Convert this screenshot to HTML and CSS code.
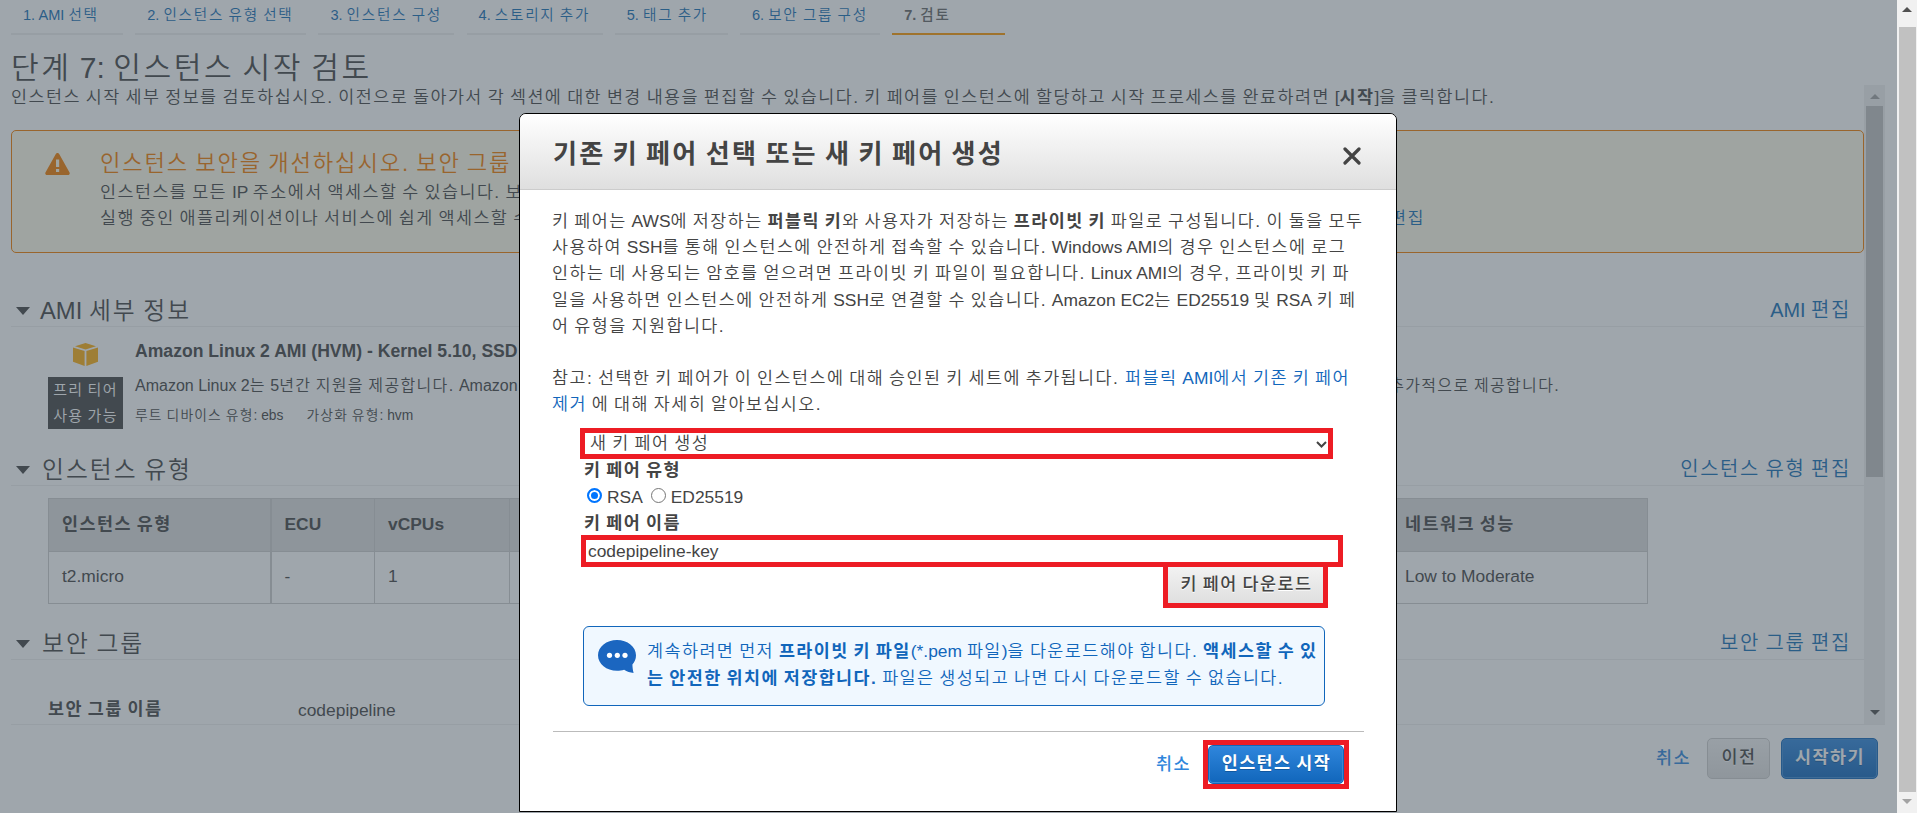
FILE: index.html
```html
<!DOCTYPE html>
<html lang="ko">
<head>
    <meta charset="utf-8">
    <title>인스턴스 시작 검토</title>
    <link rel="stylesheet" href="styles.css">
</head>
<body>
    <div class="page">
        <div class="wizard">
            <ul class="steps">
                <li class="step step-1"><i>1. AMI </i>선택</li>
                <li class="step step-2"><i>2. </i>인스턴스 유형 선택</li>
                <li class="step step-3"><i>3. </i>인스턴스 구성</li>
                <li class="step step-4"><i>4. </i>스토리지 추가</li>
                <li class="step step-5"><i>5. </i>태그 추가</li>
                <li class="step step-6"><i>6. </i>보안 그룹 구성</li>
                <li class="step step-7 active"><i>7. </i>검토</li>
            </ul>

            <h1>단계<i> 7: </i>인스턴스 시작 검토</h1>

            <div class="panel">
                <div class="panel-content">
                    <p class="lead">인스턴스 시작 세부 정보를 검토하십시오. 이전으로 돌아가서 각 섹션에 대한 변경 내용을 편집할 수 있습니다. 키 페어를 인스턴스에 할당하고 시작 프로세스를 완료하려면 <i>[</i><b>시작</b><i>]</i>을 클릭합니다.</p>

                    <div class="warning">
                        <svg class="warning-icon" viewBox="0 0 25 22">
                            <path d="M12.5 0c.8 0 1.3.5 1.7 1.1l10.2 18.2c.8 1.4.1 2.7-1.5 2.7H2.1C.5 22-.2 20.7.6 19.3L10.8 1.1C11.2.5 11.7 0 12.5 0z" fill="#f37c00"/>
                            <path d="M11 6.500h3.200v7.500H11zM11 16h3.200v3H11z" fill="#fffbe8"/>
                        </svg>
                        <div class="warning-text">
                            <div class="warning-title">인스턴스 보안을 개선하십시오. 보안 그룹</div>
                            <div>인스턴스를 모든 <i>IP </i>주소에서 액세스할 수 있습니다. 보안</div>
                            <div class="split"><span>실행 중인 애플리케이션이나 서비스에 쉽게 액세스할 수</span><a>편집</a></div>
                        </div>
                    </div>

                    <div class="section-header first">
                        <span class="caret"></span>
                        <h2><i>AMI </i>세부 정보</h2>
                        <a><i>AMI </i>편집</a>
                    </div>
                    <div class="ami">
                        <div class="ami-side">
                            <svg class="cube" viewBox="0 0 25 23">
                                <path d="M12.500 0l10.500 3.200-10.500 3.300L2 3.200z" fill="#fdae10"/>
                                <path d="M0 4.500l11.600 3.600V23L0 18.700z" fill="#fdae10"/>
                                <path d="M25 4.500L13.400 8.100V23L25 18.700z" fill="#fdae10"/>
                            </svg>
                            <div class="badge">프리 티어<br>사용 가능</div>
                        </div>
                        <div class="ami-info">
                            <div class="ami-name"><i>Amazon Linux 2 AMI (HVM) - Kernel 5.10, SSD</i></div>
                            <div class="ami-desc split"><span><i>Amazon Linux 2</i>는 <i>5</i>년간 지원을 제공합니다. <i>Amazon</i></span><span>추가적으로 제공합니다.</span></div>
                            <div class="ami-meta"><span>루트 디바이스 유형<i>: ebs</i></span><span>가상화 유형<i>: hvm</i></span></div>
                        </div>
                    </div>

                    <div class="section-header">
                        <span class="caret"></span>
                        <h2 class="shift">인스턴스 유형</h2>
                        <a>인스턴스 유형 편집</a>
                    </div>
                    <table class="types">
                        <thead>
                            <tr>
                                <th class="col-type">인스턴스 유형</th>
                                <th class="col-ecu"><i>ECU</i></th>
                                <th class="col-cpu"><i>vCPUs</i></th>
                                <th class="col-rest"></th>
                                <th>네트워크 성능</th>
                            </tr>
                        </thead>
                        <tbody>
                            <tr>
                                <td class="col-type"><i>t2.micro</i></td>
                                <td><i>-</i></td>
                                <td><i>1</i></td>
                                <td></td>
                                <td><i>Low to Moderate</i></td>
                            </tr>
                        </tbody>
                    </table>

                    <div class="section-header last">
                        <span class="caret"></span>
                        <h2 class="shift">보안 그룹</h2>
                        <a>보안 그룹 편집</a>
                    </div>
                    <div class="group-row">
                        <b>보안 그룹 이름</b>
                        <i>codepipeline</i>
                    </div>
                </div>
                <div class="scrollbar">
                    <span class="arrow up disabled"></span>
                    <span class="thumb"></span>
                    <span class="arrow down"></span>
                </div>
            </div>

            <div class="footer">
                <a>취소</a>
                <button class="btn">이전</button>
                <button class="btn btn-primary">시작하기</button>
            </div>

            <div class="overlay"></div>
        </div>
        <div class="scrollbar page-scrollbar">
            <span class="arrow up"></span>
            <span class="thumb"></span>
            <span class="arrow down disabled"></span>
        </div>
    </div>

    <div class="modal">
        <div class="modal-header">
            <h3>기존 키 페어 선택 또는 새 키 페어 생성</h3>
            <svg class="close" viewBox="0 0 18 18"><path d="M2 2l14 14M16 2L2 16" stroke="#444" stroke-width="3.200" stroke-linecap="round"/></svg>
        </div>
        <div class="modal-body">
            <p>키 페어는 <i>AWS</i>에 저장하는 <b>퍼블릭 키</b>와 사용자가 저장하는 <b>프라이빗 키</b> 파일로 구성됩니다. 이 둘을 모두<br>
            사용하여 <i>SSH</i>를 통해 인스턴스에 안전하게 접속할 수 있습니다. <i>Windows AMI</i>의 경우 인스턴스에 로그<br>
            인하는 데 사용되는 암호를 얻으려면 프라이빗 키 파일이 필요합니다. <i>Linux AMI</i>의 경우, 프라이빗 키 파<br>
            일을 사용하면 인스턴스에 안전하게 <i>SSH</i>로 연결할 수 있습니다. <i>Amazon EC2</i>는 <i>ED25519</i> 및 <i>RSA</i> 키 페<br>
            어 유형을 지원합니다.</p>
            <p>참고: 선택한 키 페어가 이 인스턴스에 대해 승인된 키 세트에 추가됩니다. <a class="gap">퍼블릭 <i>AMI</i>에서 기존 키 페어</a><br>
            <a>제거</a> 에 대해 자세히 알아보십시오.</p>

            <div class="key-form">
                <div class="select marked">
                    <span>새 키 페어 생성</span>
                    <svg viewBox="0 0 11 7"><path d="M1 1l4.500 4.500L10 1" fill="none" stroke="#444" stroke-width="2"/></svg>
                </div>
                <b class="label">키 페어 유형</b>
                <div class="radios">
                    <span class="radio checked"></span><i>RSA</i>
                    <span class="radio"></span><i>ED25519</i>
                </div>
                <b class="label name-label">키 페어 이름</b>
                <div class="input marked"><i>codepipeline-key</i></div>
                <div class="download marked">키 페어 다운로드</div>
                <div class="info">
                    <svg viewBox="0 0 38 33">
                        <path d="M19 0C29.500 0 38 6.600 38 15.300c0 3.700-1.300 6.700-3.600 9.200.1 3.300.5 6 1.200 8.500-3.600-.4-6.600-1.600-9.500-3.300-2.200.8-4.600 1.100-7.100 1.100C8.500 30.800 0 24 0 15.300S8.500 0 19 0z" fill="#1b66c0"/>
                        <circle cx="11.500" cy="15.300" r="2.600" fill="#fff"/>
                        <circle cx="19.300" cy="15.300" r="2.600" fill="#fff"/>
                        <circle cx="27" cy="15.300" r="2.600" fill="#fff"/>
                    </svg>
                    <p>계속하려면 먼저 <b>프라이빗 키 파일</b><i>(*.pem </i>파일<i>)</i>을 다운로드해야 합니다. <b>액세스할 수 있</b><br>
                    <b>는 안전한 위치에 저장합니다.</b> 파일은 생성되고 나면 다시 다운로드할 수 없습니다.</p>
                </div>
            </div>
        </div>
        <div class="modal-footer">
            <a>취소</a>
            <div class="launch marked"><button class="btn btn-primary">인스턴스 시작</button></div>
        </div>
    </div>
</body>
</html>
```
FILE: styles.css
```css
* {
    margin: 0;
    padding: 0;
    box-sizing: border-box;
}

body {
    height: 813px;
    overflow: hidden;
    position: relative;
    font-family: "Liberation Sans", "Noto Sans CJK KR", sans-serif;
    font-size: 17.4px;
    font-weight: 350;
    line-height: 26px;
    color: #444;
    background: #fff;
    white-space: nowrap;
}

/* hangul is set on a full em, latin runs (i) keep their own widths */
body, h1, h2, h3, .warning-title, .badge, .ami-desc, .ami-meta, .section-header a, .btn {
    letter-spacing: 0.084em;
    word-spacing: -0.084em;
}

i {
    font-style: normal;
    letter-spacing: 0;
    word-spacing: 0;
}

b {
    font-weight: 700;
}

a {
    color: #146eb4;
}

.page {
    display: flex;
    height: 813px;
}

.wizard {
    position: relative;
    width: 1897px;
    padding-left: 11px;
}

.overlay {
    position: absolute;
    inset: 0;
    background: rgba(63, 77, 89, 0.5);
}

.steps {
    display: flex;
    gap: 12.2px;
    list-style: none;
    height: 35px;
}

.step {
    height: 35px;
    padding: 2px 0 0 12px;
    font-size: 14.6px;
    line-height: 27px;
    letter-spacing: 0.12em;
    word-spacing: -0.1em;
    color: #146eb4;
    border-bottom: 2px solid #eee;
}

.step-1 { width: 112px; }
.step-2 { width: 171px; }
.step-3 { width: 136px; }
.step-4 { width: 136px; }
.step-5 { width: 113px; }
.step-6 { width: 140px; }
.step-7 { width: 113px; }

.step.active {
    color: #666;
    font-weight: 500;
    border-bottom-color: #f90;
}

.active i {
    font-weight: 700;
}

h1 {
    height: 50px;
    padding-top: 14px;
    font-size: 30.1px;
    font-weight: 350;
    line-height: 37px;
}

.panel {
    display: flex;
    width: 1874px;
    height: 640px;
    border-bottom: 1px solid #eee;
}

.panel-content {
    width: 1853px;
}

.lead {
    height: 25px;
    line-height: 25px;
}

.warning {
    display: flex;
    height: 123px;
    margin-top: 20px;
    padding: 17px 0 0 33px;
    border: 1px solid #f37c00;
    border-radius: 5px;
    background: #fffbe8;
}

.warning-icon {
    width: 25px;
    height: 22px;
    margin-top: 5px;
}

.warning-text {
    width: 1325px;
    margin-left: 30px;
}

.warning-title {
    height: 31px;
    font-size: 22.2px;
    line-height: 31px;
    color: #f37c00;
}

.split {
    display: flex;
    justify-content: space-between;
}

.section-header {
    display: flex;
    align-items: center;
    height: 36px;
    padding: 4px 13px 0 5px;
    border-bottom: 1px solid #eee;
}

.section-header.first {
    margin-top: 38px;
}

.section-header.last {
    margin-top: 20px;
}

.section-header h2 {
    margin-left: 10px;
    font-size: 23.8px;
    font-weight: 350;
    line-height: 30px;
}

.section-header h2.shift {
    margin-left: 12px;
}

.section-header a {
    margin-left: auto;
    margin-top: -2px;
    font-size: 19.9px;
}

.caret {
    border: 7px solid transparent;
    border-top: 8px solid #444;
    border-bottom: 0;
}

.ami {
    display: flex;
    height: 123px;
    padding-left: 37px;
}

.ami-side {
    width: 75px;
    padding-top: 16px;
    text-align: center;
}

.cube {
    display: block;
    width: 25px;
    height: 23px;
    margin: 0 auto;
}

.badge {
    height: 52px;
    margin-top: 11px;
    font-size: 15px;
    line-height: 26px;
    color: #fff;
    background: #444;
}

.ami-info {
    width: 1425px;
    padding-top: 11px;
    margin-left: 12px;
}

.ami-name {
    font-size: 17.6px;
    font-weight: 700;
    line-height: 26px;
}

.ami-desc {
    margin-top: 9px;
    font-size: 16px;
}

.ami-meta {
    display: flex;
    gap: 23px;
    margin-top: 4px;
    font-size: 13.8px;
}

.types {
    width: 1600px;
    margin: 12px 0 0 37px;
    table-layout: fixed;
    border-collapse: collapse;
}

.types th,
.types td {
    height: 52.5px;
    padding: 0 0 2px 13px;
    text-align: left;
    border: 1px solid #ccc;
}

.types th {
    background: #ddd;
}

.types .col-type {
    border-right-width: 2px;
}

.col-type { width: 222px; }
.col-ecu { width: 104px; }
.col-cpu { width: 135px; }
.col-rest { width: 882px; }

.group-row {
    display: flex;
    padding: 36px 0 0 37px;
}

.group-row b {
    width: 250px;
}

.group-row i {
    padding-top: 1px;
}

.scrollbar {
    display: flex;
    flex-direction: column;
    align-items: center;
    width: 21px;
    background: #f1f1f1;
}

.scrollbar .thumb {
    width: 17px;
    height: 371px;
    margin: 7px 0 auto;
    background: #c1c1c1;
}

.arrow {
    border: 5px solid transparent;
}

.arrow.up {
    margin-top: 9px;
    border-top: 0;
    border-bottom-color: #505050;
}

.arrow.down {
    margin-bottom: 9px;
    border-bottom: 0;
    border-top-color: #505050;
}

.arrow.up.disabled {
    border-bottom-color: #a3a3a3;
}

.arrow.down.disabled {
    border-top-color: #a3a3a3;
}

.page-scrollbar {
    width: 20px;
}

.page-scrollbar .arrow.up {
    margin-top: 7px;
}

.page-scrollbar .thumb {
    height: 765px;
    margin-top: 15px;
}

.footer {
    display: flex;
    align-items: flex-start;
    justify-content: flex-end;
    padding: 13px 19px 0 0;
}

.footer a {
    margin: 7px 16px 0 0;
    font-weight: 500;
    color: #3186dd;
}

.btn {
    height: 41px;
    padding: 0 0 4px 1px;
    font: 700 17.4px/32px "Liberation Sans", "Noto Sans CJK KR", sans-serif;
    color: #444;
    text-align: center;
    border: 1px solid #ccc;
    border-radius: 5px;
    background: linear-gradient(#f2f2f2, #dfdfdf);
    text-shadow: 0 1px #fff;
}

.footer .btn {
    width: 63px;
    font-weight: 500;
}

.footer .btn-primary {
    width: 97px;
    margin-left: 11px;
    font-weight: 700;
}

.btn-primary {
    color: #fff;
    border-color: #1166bb;
    background: linear-gradient(#2f86dc, #1166bb);
    box-shadow: inset 0 0 0 1px #3b88d2;
    text-shadow: 0 1px #1158a0;
}

.modal {
    position: absolute;
    left: 519px;
    top: 113px;
    width: 878px;
    height: 699px;
    border: 1px solid #000;
    border-radius: 7px 7px 0 0;
    background: #fff;
}

.modal-header {
    display: flex;
    justify-content: space-between;
    height: 76px;
    padding: 20px 35px 0 33px;
    border-bottom: 1px solid #ccc;
    border-radius: 6px 6px 0 0;
    background: linear-gradient(#fff, #dfdfdf);
}

.modal-header h3 {
    font-size: 26.1px;
    font-weight: 700;
    line-height: 40px;
}

.close {
    width: 18px;
    height: 18px;
    margin-top: 13px;
}

.modal-body {
    padding: 18px 32px 0 32px;
}

.modal-body p {
    margin-bottom: 26px;
    line-height: 26.2px;
}

.modal-body a,
.modal-body .info {
    color: #1166bb;
}

.modal-body .gap {
    margin-left: 1px;
}

.marked {
    border: 5px solid #ed1c24;
}

.key-form {
    display: flex;
    flex-direction: column;
    align-items: flex-start;
    margin: -15px 0 0 28px;
}

.select {
    display: flex;
    align-items: center;
    justify-content: space-between;
    width: 753px;
    height: 31px;
    padding: 0 1px 2px 5px;
}

.select svg {
    width: 11px;
    height: 7px;
    margin-top: 3px;
}

.label {
    height: 26px;
    margin: -2px 0 0 4px;
}

.radios {
    display: flex;
    align-items: center;
    height: 28px;
    padding-left: 7px;
}

.radio {
    width: 15px;
    height: 15px;
    margin: -4px 5px 0 0;
    border: 1px solid #767676;
    border-radius: 50%;
}

.radio.checked {
    border: 2px solid #0075ff;
    background: #0075ff;
    box-shadow: inset 0 0 0 2px #fff;
}

i + .radio {
    margin-left: 8px;
}

.name-label {
    margin-top: -1px;
}

.input {
    width: 762px;
    height: 32px;
    margin: -1px 0 0 1px;
    padding-left: 2px;
    line-height: 22px;
}

.download {
    width: 165px;
    height: 41px;
    margin: 0 0 0 583px;
    padding-left: 2px;
    border-top: 0;
    font-weight: 500;
    line-height: 35px;
    text-align: center;
    background: linear-gradient(#f2f2f2, #dfdfdf);
    text-shadow: 0 1px #fff;
}

.info {
    display: flex;
    width: 742px;
    height: 80px;
    margin: 18px 0 0 3px;
    padding: 11px 0 0 14px;
    border: 1px solid #1166bb;
    border-radius: 6px;
    background: #f0f8ff;
}

.info svg {
    width: 38px;
    height: 33px;
    margin: 2px 11px 0 0;
}

.info p {
    margin: 0;
    line-height: 27px;
}

.modal-footer {
    display: flex;
    align-items: flex-start;
    justify-content: flex-end;
    width: 811px;
    margin: 25px 0 0 33px;
    padding: 8px 15px 0 0;
    border-top: 1px solid #bbb;
}

.modal-footer a {
    margin: 11px 12px 0 0;
    font-weight: 500;
    color: #2f86dc;
}

.launch {
    width: 146px;
    height: 49px;
}

.launch .btn {
    width: 136px;
    height: 39px;
}
```
